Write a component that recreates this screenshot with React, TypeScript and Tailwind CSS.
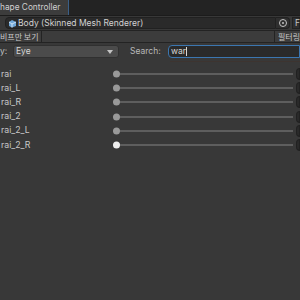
import React from 'react';

const shapes = ['rai', 'rai_L', 'rai_R', 'rai_2', 'rai_2_L', 'rai_2_R'];

const MeshIcon = () => (
  <svg width="9" height="9" viewBox="0 0 9 9" className="shrink-0">
    <path d="M1 3 L4 1 L8 3 L8 7 L4 8.5 L1 7 Z" fill="#6fa7d8" />
    <path d="M1 3 L4 5 L8 3 M4 5 L4 8.5" stroke="#d8e8f5" strokeWidth="0.9" fill="none" />
  </svg>
);

const ShapeRow: React.FC<{ name: string; active?: boolean }> = ({ name, active }) => (
  <div className="flex items-center h-[14.2px]">
    <span className="w-[113px] pl-px text-[8.7px] text-[#c8c8c8] leading-none">{name}</span>
    <div className="relative flex-1 h-full flex items-center">
      <div className="h-[2px] w-full bg-[#5e5e5e]" />
      <div
        className={`absolute left-0 top-1/2 -translate-y-1/2 w-[7px] h-[7px] rounded-full ${
          active ? 'bg-[#eeeeee]' : 'bg-[#999999]'
        }`}
      />
    </div>
    <div className="ml-[3px] w-[4px] h-[12px] bg-[#2a2a2a] border border-[#212121] rounded-l-sm" />
  </div>
);

const App: React.FC = () => {
  return (
    <div
      className="w-[300px] h-[300px] overflow-hidden bg-[#383838] text-[#c4c4c4]"
      style={{ fontFamily: 'Inter, "Noto Sans CJK KR", sans-serif' }}
    >
      {/* tab bar */}
      <div className="flex h-[16px] bg-[#232323] border-b border-[#1c1c1c]">
        <div className="w-[69px] bg-[#3c3c3c] border-r border-[#3a5f88] flex items-center">
          <span className="text-[8.3px] text-[#d0d0d0] leading-none whitespace-nowrap">hape Controller</span>
        </div>
      </div>

      {/* object field */}
      <div className="flex items-center h-[12px] mt-[1px] pl-[5px]">
        <div className="flex items-center flex-1 h-full bg-[#2a2a2a] border border-[#212121] rounded-l-sm pl-[2px] gap-[1px]">
          <MeshIcon />
          <span className="text-[8.5px] text-[#d2d2d2] leading-none whitespace-nowrap">Body (Skinned Mesh Renderer)</span>
        </div>
        <div className="w-[14px] h-full bg-[#2f2f2f] border-y border-r border-[#212121] rounded-r-sm flex items-center justify-center">
          <div className="w-[8px] h-[8px] rounded-full border border-[#c4c4c4] flex items-center justify-center">
            <div className="w-[2px] h-[2px] rounded-full bg-[#c4c4c4]" />
          </div>
        </div>
        <div className="ml-[2px] w-[8px] h-full bg-[#2f2f2f] border border-[#212121] flex items-center pl-[2px]">
          <span className="text-[8.5px] leading-none">F</span>
        </div>
      </div>

      {/* toolbar */}
      <div className="flex items-center h-[13px] mt-[1px] bg-[#3c3c3c] border-y border-[#232323]">
        <div className="w-[42px] h-full border-r border-[#232323] flex items-center overflow-hidden">
          <span
            className="text-[8px] leading-none text-[#c8c8c8] whitespace-nowrap"
            style={{ fontFamily: '"Noto Sans CJK KR", sans-serif' }}
          >
            비프만 보기
          </span>
        </div>
        <div className="flex-1" />
        <div className="h-full pl-[3px] border-l border-[#232323] flex items-center w-[26px]">
          <span
            className="text-[8px] leading-none text-[#c8c8c8] whitespace-nowrap"
            style={{ fontFamily: '"Noto Sans CJK KR", sans-serif' }}
          >
            필터링
          </span>
        </div>
      </div>

      {/* category + search */}
      <div className="flex items-center h-[13px] mt-[2px]">
        <span className="w-[13px] text-[8.5px] leading-none">y:</span>
        <div className="w-[106px] h-full bg-[#4b4b4b] border border-[#303030] rounded-[3px] flex items-center justify-between px-[2px]">
          <span className="text-[8.5px] leading-none text-[#d6d6d6]">Eye</span>
          <svg width="6" height="4" viewBox="0 0 6 4" className="mr-[3px]">
            <path d="M0 0 L6 0 L3 4 Z" fill="#c4c4c4" />
          </svg>
        </div>
        <span className="ml-[11px] w-[38px] text-[8.5px] leading-none text-[#b8b8b8]">Search:</span>
        <div className="flex-1 h-full bg-[#2a2a2a] border border-[#3b76b0] rounded-l-sm flex items-center pl-[2px]">
          <span className="text-[8.5px] leading-none text-[#d8d8d8]">war</span>
          <div className="w-px h-[9px] bg-[#d8d8d8]" />
        </div>
      </div>

      <div className="mt-[3px] ml-[170px] h-px bg-[#3d3430]" />

      {/* shape list */}
      <div className="mt-[5px] flex flex-col">
        {shapes.map((s, i) => (
          <ShapeRow key={s} name={s} active={i === shapes.length - 1} />
        ))}
      </div>
    </div>
  );
};

export default App;
